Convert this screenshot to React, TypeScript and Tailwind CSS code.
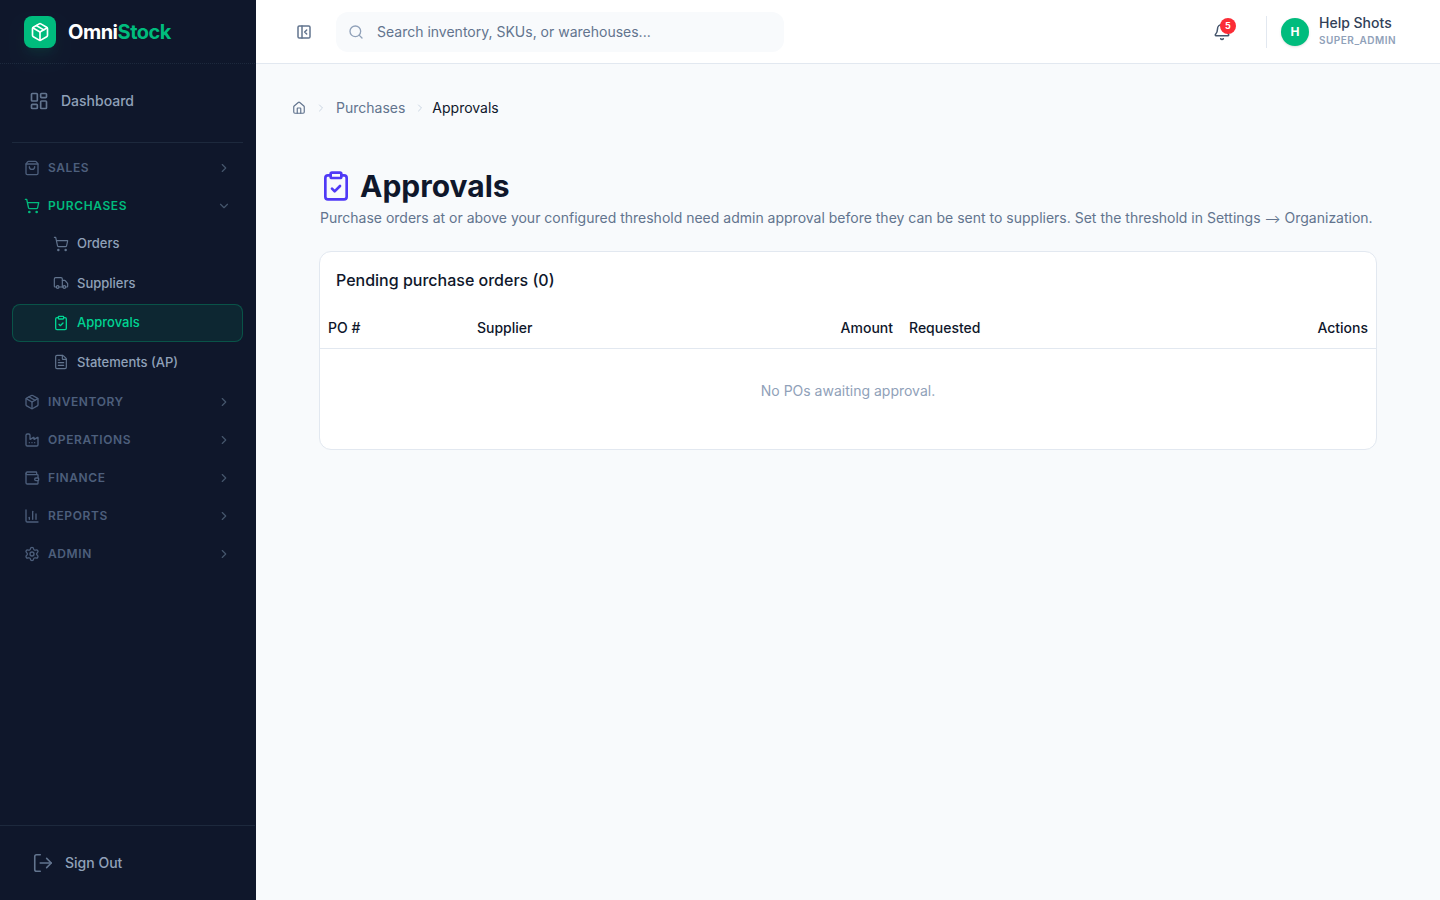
import React from 'react';
import {
  Bell, BarChart3, ChevronDown, ChevronRight, ClipboardCheck, Factory, FileText, Home, LayoutDashboard,
  LogOut, Package, PanelLeftClose, Search, Settings, ShoppingBag, ShoppingCart, Truck, Wallet,
} from 'lucide-react';

const Group = ({ icon: Icon, label, open = false }: { icon: React.ElementType; label: string; open?: boolean }) => (
  <div className="h-[38px] pl-[24px] pr-[24px] flex items-center">
    <Icon className={`w-4 h-4 mr-2 ${open ? 'text-[#00bc7d]' : 'text-[#4d5f7c]'}`} strokeWidth={2} />
    <span className={`flex-1 text-xs font-semibold uppercase tracking-[0.05em] ${open ? 'text-[#00bc7d]' : 'text-[#4d5f7c]'}`}>{label}</span>
    {open
      ? <ChevronDown className="w-3.5 h-3.5 text-[#45556c]" />
      : <ChevronRight className="w-3.5 h-3.5 text-[#45556c]" />}
  </div>
);

const SubItem = ({ icon: Icon, label, active = false }: { icon: React.ElementType; label: string; active?: boolean }) => (
  <div className={`mx-3 h-[37.5px] pl-[40px] flex items-center gap-2 rounded-lg border text-[13px] font-medium ${active ? 'bg-[#00bc7d]/10 border-[#00bc7d]/30 text-[#00d492]' : 'border-transparent text-[#90a1b9]'}`}>
    <Icon className={`w-4 h-4 ${active ? 'text-[#00d492]' : 'text-[#62748e]'}`} strokeWidth={active ? 2 : 1.75} />
    <span>{label}</span>
  </div>
);

const Sidebar = () => (
  <aside className="w-64 h-screen shrink-0 bg-[#0f172b] border-r border-[#0f172b] flex flex-col">
    <div className="h-16 px-6 pt-[1px] flex items-center gap-3 border-b border-dotted border-[#1d293d]">
      <div className="w-8 h-8 rounded-lg bg-[#00bc7d] flex items-center justify-center shadow-lg shadow-[#00bc7d]/10">
        <Package className="w-5 h-5 text-white" strokeWidth={2} />
      </div>
      <div className="text-xl font-bold tracking-tight text-white leading-none">
        Omni<span className="text-[#00bc7d]">Stock</span>
      </div>
    </div>
    <div className="mx-3 mt-[14px] h-[65px] border-b border-[#1d293d] pb-[18px] pl-[17px] flex items-center gap-3 text-sm font-medium text-[#90a1b9]">
      <LayoutDashboard className="w-5 h-5 text-[#62748e]" strokeWidth={2} />
      <span>Dashboard</span>
    </div>
    <nav className="flex-1 pt-[6px]">
      <Group icon={ShoppingBag} label="Sales" />
      <Group icon={ShoppingCart} label="Purchases" open />
      <div className="flex flex-col gap-[2px] mb-[2px]">
        <SubItem icon={ShoppingCart} label="Orders" />
        <SubItem icon={Truck} label="Suppliers" />
        <SubItem icon={ClipboardCheck} label="Approvals" active />
        <SubItem icon={FileText} label="Statements (AP)" />
      </div>
      <Group icon={Package} label="Inventory" />
      <Group icon={Factory} label="Operations" />
      <Group icon={Wallet} label="Finance" />
      <Group icon={BarChart3} label="Reports" />
      <Group icon={Settings} label="Admin" />
    </nav>
    <div className="h-[75px] border-t border-[#1d293d] pl-[32px] flex items-center gap-[11px] text-sm font-medium text-[#90a1b9]">
      <LogOut className="w-[22px] h-[22px] text-[#62748e]" strokeWidth={1.75} />
      <span>Sign Out</span>
    </div>
  </aside>
);

const Header = () => (
  <header className="h-16 shrink-0 bg-white border-b border-[#e2e8f0] pl-10 pr-11 flex items-center">
    <PanelLeftClose className="w-4 h-4 text-[#62748e]" strokeWidth={2.25} />
    <div className="ml-6 w-[448px] h-10 rounded-xl bg-[#f8fafc] flex items-center pl-3 gap-[13px]">
      <Search className="w-4 h-4 text-[#90a1b9]" />
      <span className="text-sm text-[#62748e]">Search inventory, SKUs, or warehouses...</span>
    </div>
    <div className="ml-auto flex items-center">
      <div className="relative mr-[35px]">
        <Bell className="w-[18px] h-[18px] text-[#45556c]" />
        <span className="absolute -top-[5px] -right-[5px] w-4 h-4 rounded-full bg-[#fb2c36] text-white text-[9px] font-bold flex items-center justify-center">5</span>
      </div>
      <div className="h-8 border-l border-[#e2e8f0] mr-[14px]" />
      <div className="w-7 h-7 rounded-full bg-[#00bc7d] text-white text-xs font-bold flex items-center justify-center shadow-sm mr-[10px]">H</div>
      <div className="w-[77px] -mt-[3px]">
        <div className="text-sm font-medium text-[#314158] leading-[18px]">Help Shots</div>
        <div className="text-[10px] font-semibold text-[#90a1b9] tracking-[0.05em] leading-[14px] whitespace-nowrap mt-[1px]">SUPER_ADMIN</div>
      </div>
    </div>
  </header>
);

export default function App() {
  return (
    <div className="h-screen flex bg-[#f8fafc] overflow-hidden font-['Inter',sans-serif]">
      <Sidebar />
      <main className="flex-1 flex flex-col">
        <Header />
        <div className="flex-1 pt-[34px] pl-9 pr-[63px]">
          <div className="h-5 flex items-center text-sm">
            <Home className="w-3.5 h-3.5 text-[#62748e]" />
            <ChevronRight className="w-3 h-3 ml-[9px] text-[#cad5e2]" />
            <span className="ml-[9px] text-[#62748e]">Purchases</span>
            <ChevronRight className="w-3 h-3 ml-[9px] text-[#cad5e2]" />
            <span className="ml-[6px] text-[#0f172b]">Approvals</span>
          </div>
          <div className="pl-[27px] mt-[50px]">
            <div className="flex items-center gap-[8px] h-9 pl-[1px]">
              <ClipboardCheck className="w-8 h-8 text-[#4f39f6]" />
              <h1 className="text-3xl font-bold text-[#0f172b]">Approvals</h1>
            </div>
            <p className="mt-[4px] pl-[1px] text-sm text-[#62748e] whitespace-nowrap">
              Purchase orders at or above your configured threshold need admin approval before they can be sent to suppliers. Set the threshold in Settings <span className="text-[12px]">⟶</span> Organization.
            </p>
            <section className="mt-[23px] h-[199px] bg-white rounded-xl border border-[#e2e8f0]">
              <h2 className="pt-[16px] pl-4 text-base font-medium text-[#0f172b] leading-6">Pending purchase orders (0)</h2>
              <div className="mt-4 h-[41px] px-2 flex items-center border-b border-[#e2e8f0] text-sm font-medium text-[#0f172b]">
                <span className="w-[149px]">PO #</span>
                <span className="w-[356px]">Supplier</span>
                <span className="w-[60px] text-right">Amount</span>
                <span className="ml-4 flex-1">Requested</span>
                <span>Actions</span>
              </div>
              <div className="h-[84px] flex items-center justify-center text-sm text-[#90a1b9]">No POs awaiting approval.</div>
            </section>
          </div>
        </div>
      </main>
    </div>
  );
}
